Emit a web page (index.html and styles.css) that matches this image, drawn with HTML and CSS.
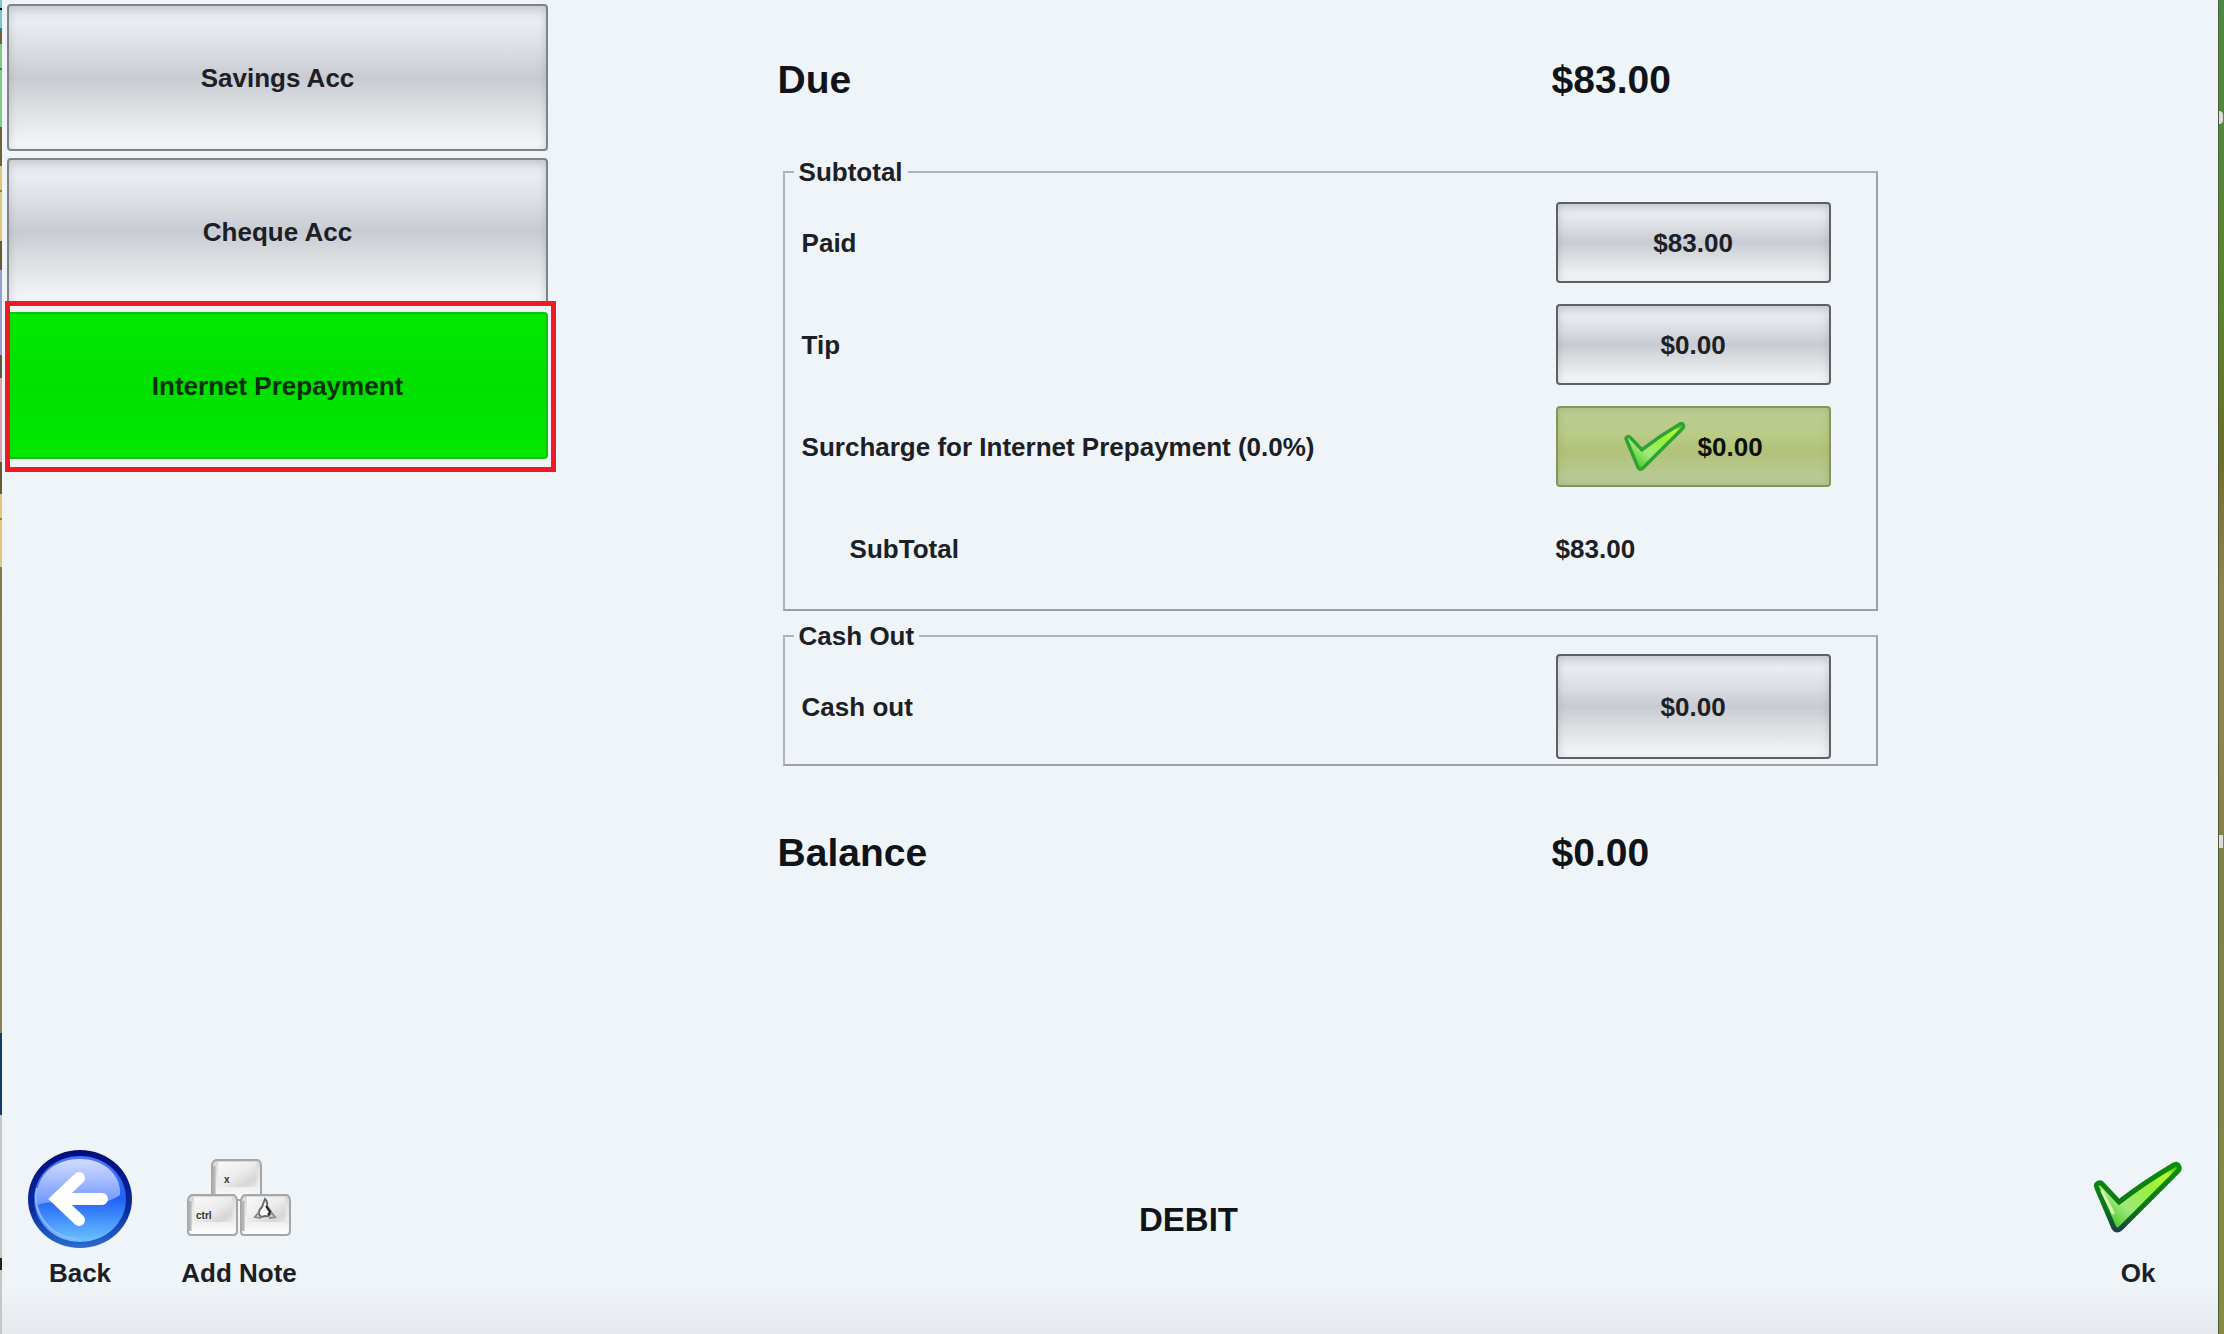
FILE: index.html
```html
<!DOCTYPE html>
<html lang="en">
<head>
    <meta charset="utf-8">
    <title>Debit Payment</title>
    <link rel="stylesheet" href="styles.css">
</head>
<body>
    <div class="edge edge-left"></div>
    <main class="panel">
        <div class="payment">
            <nav class="accounts">
                <button type="button" class="account">Savings Acc</button>
                <button type="button" class="account">Cheque Acc</button>
                <button type="button" class="account selected">Internet Prepayment</button>
            </nav>

            <form class="details">
                <div class="total">
                    <span>Due</span>
                    <span>$83.00</span>
                </div>

                <fieldset class="group subtotal">
                    <legend>Subtotal</legend>
                    <div class="row">
                        <label for="paid">Paid</label>
                        <button type="button" id="paid" class="amount">$83.00</button>
                    </div>
                    <div class="row">
                        <label for="tip">Tip</label>
                        <button type="button" id="tip" class="amount">$0.00</button>
                    </div>
                    <div class="row">
                        <label for="surcharge">Surcharge for Internet Prepayment (0.0%)</label>
                        <button type="button" id="surcharge" class="amount checked">
                            <svg class="tick" viewBox="0 0 88 72" aria-hidden="true">
                                <use href="#tickShape" fill="url(#tickFill)" stroke="#2fa136" stroke-width="5"/>
                            </svg>
                            $0.00
                        </button>
                    </div>
                    <div class="row">
                        <span class="indent">SubTotal</span>
                        <span>$83.00</span>
                    </div>
                </fieldset>

                <fieldset class="group cash">
                    <legend>Cash Out</legend>
                    <div class="row">
                        <label for="cashOut">Cash out</label>
                        <button type="button" id="cashOut" class="amount">$0.00</button>
                    </div>
                </fieldset>

                <div class="total balance">
                    <span>Balance</span>
                    <span>$0.00</span>
                </div>
            </form>
        </div>

        <footer class="actions">
            <button type="button" class="action">
                <svg class="icon" viewBox="0 0 104 100" aria-hidden="true">
                    <defs>
                        <linearGradient id="backRing" x1="0" y1="0" x2="0" y2="1">
                            <stop offset="0" stop-color="#000c7c"/>
                            <stop offset="0.6" stop-color="#0a2a9c"/>
                            <stop offset="1" stop-color="#2b6cd0"/>
                        </linearGradient>
                        <linearGradient id="backFill" x1="0" y1="0" x2="0" y2="1">
                            <stop offset="0" stop-color="#4a78ff"/>
                            <stop offset="0.5" stop-color="#1f62f8"/>
                            <stop offset="1" stop-color="#6cc4ff"/>
                        </linearGradient>
                        <linearGradient id="backGloss" x1="0" y1="0" x2="0" y2="1">
                            <stop offset="0" stop-color="#d3dcff"/>
                            <stop offset="1" stop-color="#6d95fd"/>
                        </linearGradient>
                    </defs>
                    <ellipse cx="52" cy="51" rx="52" ry="49" fill="url(#backRing)"/>
                    <ellipse cx="52" cy="51" rx="46" ry="43" fill="url(#backFill)"/>
                    <path d="M9 57 C5 30 24 11 52 11 C78 11 94 29 92 47 C80 55 70 56 54 55 C36 54 22 53 9 57 Z" fill="url(#backGloss)"/>
                    <path d="M9 40 A44 42 0 0 0 50 91" fill="none" stroke="#8fb8ff" stroke-width="2"/>
                    <path d="M51 30 L29 51 L51 72 M30 51 H74" fill="none" stroke="#fff" stroke-width="12" stroke-linecap="round"/>
                    <path d="M21 51 L44 33 V69 Z" fill="#fff"/>
                </svg>
                Back
            </button>
            <button type="button" class="action">
                <svg class="icon" viewBox="0 0 104 100" aria-hidden="true">
                    <defs>
                        <linearGradient id="keySide" x1="0" y1="0" x2="0" y2="1">
                            <stop offset="0" stop-color="#d8d8d8"/>
                            <stop offset="0.7" stop-color="#f0f0f0"/>
                            <stop offset="1" stop-color="#ffffff"/>
                        </linearGradient>
                        <linearGradient id="keyFace" x1="0" y1="0" x2="1" y2="1">
                            <stop offset="0" stop-color="#f8f8f8"/>
                            <stop offset="0.5" stop-color="#ececec"/>
                            <stop offset="0.8" stop-color="#d6d6d6"/>
                            <stop offset="1" stop-color="#e8e8e8"/>
                        </linearGradient>
                        <g id="key">
                            <path d="M6 1 H46 Q49 1 50 6 V37 Q50 41 46 41 H4 Q1 41 1 37 V6 Q2 1 6 1 Z" fill="url(#keySide)" stroke="#a6a6a6" stroke-width="2"/>
                            <path d="M7 3 H45 L46 28 H7 Z" fill="url(#keyFace)"/>
                            <path d="M3 37 V7" stroke="#b4b4b4" stroke-width="3"/>
                        </g>
                    </defs>
                    <use href="#key" x="24" y="11"/>
                    <use href="#key" x="0" y="46"/>
                    <use href="#key" x="53" y="46"/>
                    <text x="37" y="35" class="key-text">x</text>
                    <text x="9" y="71" class="key-text">ctrl</text>
                    <path d="M78 51 Q81 54 80 58 L84 64 Q83 69 78 68 Q73 70 72 66 Q71 63 75 59 Z" fill="#f8f8f8" stroke="#6a6a6a" stroke-width="2"/>
                    <path d="M79 58 L83 64 L81 67" fill="none" stroke="#222" stroke-width="2"/>
                    <path d="M72 64 L68 69 L74 70 M84 64 L88 69 L82 70" fill="none" stroke="#888" stroke-width="2"/>
                </svg>
                Add Note
            </button>
            <h1 class="method">DEBIT</h1>
            <button type="button" class="action">
                <svg class="icon" viewBox="0 0 104 100" aria-hidden="true">
                    <defs>
                        <linearGradient id="tickFill" x1="0" y1="1" x2="1" y2="0">
                            <stop offset="0.1" stop-color="#3cc81c"/>
                            <stop offset="0.35" stop-color="#a0e878"/>
                            <stop offset="0.65" stop-color="#98f03c"/>
                            <stop offset="0.85" stop-color="#b4fa30"/>
                            <stop offset="1" stop-color="#1cb414"/>
                        </linearGradient>
                        <linearGradient id="tickLine" x1="0" y1="0" x2="0" y2="1">
                            <stop offset="0" stop-color="#0a8f0a"/>
                            <stop offset="0.7" stop-color="#0c7418"/>
                            <stop offset="1" stop-color="#1c3f4c"/>
                        </linearGradient>
                        <path id="tickShape" d="M3 26 Q1 22 5 21 Q7 20 10 24 L25 40 Q51 20 80 3 Q84 1 85 5 Q86 7 83 10 L27 66 Q23 70 20 66 Z"/>
                    </defs>
                    <g transform="translate(8 14)">
                        <use href="#tickShape" fill="url(#tickFill)" stroke="url(#tickLine)" stroke-width="5"/>
                        <path d="M8 29 L19 51" fill="none" stroke="#d5f7bd" stroke-width="3" stroke-linecap="round"/>
                    </g>
                </svg>
                Ok
            </button>
        </footer>
    </main>
    <div class="edge edge-right">
        <span class="knob"></span>
        <span class="knob"></span>
    </div>
</body>
</html>
```
FILE: styles.css
```css
* {
    box-sizing: border-box;
}

body {
    margin: 0;
    min-height: 100vh;
    display: grid;
    grid-template-columns: 2px 1fr 6px;
    font-family: "Liberation Sans", Arial, sans-serif;
    font-size: 26px;
    font-weight: bold;
    line-height: 30px;
    color: #1c2024;
}

button {
    margin: 0;
    padding: 0;
    font: inherit;
    color: inherit;
    cursor: pointer;
}

/* slivers of the screen behind the dialog */
.edge-left {
    background: linear-gradient(
        #78c4d2 8px, #000000 8px 10px, #78c4d2 10px 28px, #0890b0 28px 30px,
        #6e6038 30px 44px, #82ca84 44px 68px, #3f8a48 68px 70px, #82ca84 70px 127px,
        #6e6038 127px 166px, #dcc87c 166px 190px, #a08010 190px 192px, #dcc87c 192px 241px,
        #625a30 241px 270px, #94a0d4 270px 355px, #625a30 355px 378px,
        #dca4a8 378px 462px, #625a30 462px 494px, #dcc87c 494px 518px,
        #a08010 518px 520px, #dcc87c 520px 567px, #857848 567px,
        #8a8050 1033px, #123c6c 1033px 1115px, #c4c6c8 1115px 1258px,
        #2a2010 1258px 1270px, #c4c6c8 1270px);
}

.edge-right {
    border-left: 1px solid #4c5c34;
    background: linear-gradient(#4c8a44, #5c822c 24%, #6c6c2c 34%, #94824c 44%, #94824c 55%, #80804a 65%, #878a44);
    display: flex;
    flex-direction: column;
    padding-top: 111px;
    gap: 711px;
}

.knob {
    width: 4px;
    height: 13px;
    background: #dcdcdc;
    border-radius: 0 4px 4px 0;
}

.knob:last-child {
    border-radius: 0;
}

.panel {
    display: flex;
    flex-direction: column;
    justify-content: space-between;
    background: linear-gradient(to top, #e5e9ee, #eff4f9 48px);
}

.payment {
    display: grid;
    grid-template-columns: 25% 50%;
    column-gap: 10%;
}

.accounts {
    display: flex;
    flex-direction: column;
    gap: 7px;
    padding: 4px 8px 0 5px;
}

.account,
.amount {
    border: 2px solid #7e8387;
    border-radius: 4px;
    background: linear-gradient(#e4e7eb, #e9ecf0 12%, #d9dde1 32%, #c8cbd3 50%, #dbdfe1 70%, #f6f7fb);
    box-shadow: inset 0 3px 8px rgba(110, 116, 124, 0.3);
}

.account {
    position: relative;
    height: 147px;
}

.account.selected {
    border-color: #10c010;
    background: linear-gradient(#02e802, #02e000 50%, #02e802);
    box-shadow: none;
    color: #06300a;
}

/* red frame laid over the chosen account */
.account.selected::after {
    content: "";
    position: absolute;
    inset: -13px -10px -15px -4px;
    border: 5px solid #ed1c24;
}

.details {
    padding-top: 58px;
}

.total {
    display: grid;
    grid-template-columns: 1fr 334px;
    margin-bottom: 55px;
    font-size: 39px;
    line-height: 44px;
    color: #101418;
}

.balance {
    margin: 65px 0 0;
}

.group {
    margin: 0 8px 10px 5px;
    padding: 15px 45px 20px 17px;
    border: 2px solid #b0b4b8;
    border-right-color: #9ca2a6;
    border-bottom-color: #9ca0a4;
    display: flex;
    flex-direction: column;
    gap: 21px;
}

.group legend {
    margin-left: -8px;
    padding: 0 5px;
}

.cash {
    margin-bottom: 0;
    padding-top: 3px;
    padding-bottom: 5px;
}

.row {
    display: grid;
    grid-template-columns: 1fr 275px;
    align-items: center;
    min-height: 81px;
}

.indent {
    padding-left: 48px;
}

.amount {
    height: 81px;
    display: flex;
    align-items: center;
    justify-content: center;
    gap: 12px;
    border-color: #5c6165;
}

.cash .amount {
    height: 105px;
}

.checked {
    border-color: #87935f;
    background: linear-gradient(#bccd94, #b9cb86 35%, #b2c278 55%, #bbcc9c);
    box-shadow: inset 0 0 8px rgba(120, 130, 70, 0.3);
    color: #0c1008;
}

.tick {
    width: 62px;
    height: 50px;
}

.actions {
    display: flex;
    align-items: flex-end;
    padding: 0 22px 46px 20px;
    gap: 43px;
}

.action {
    width: 116px;
    display: flex;
    flex-direction: column;
    align-items: center;
    gap: 10px;
    border: none;
    background: none;
    white-space: nowrap;
}

.icon {
    width: 104px;
    height: 100px;
}

.key-text {
    font-size: 10px;
    fill: #333333;
}

.method {
    flex: 1;
    margin: 0 0 49px;
    font-size: 33px;
    line-height: 38px;
    text-align: center;
    color: #101418;
}
```
